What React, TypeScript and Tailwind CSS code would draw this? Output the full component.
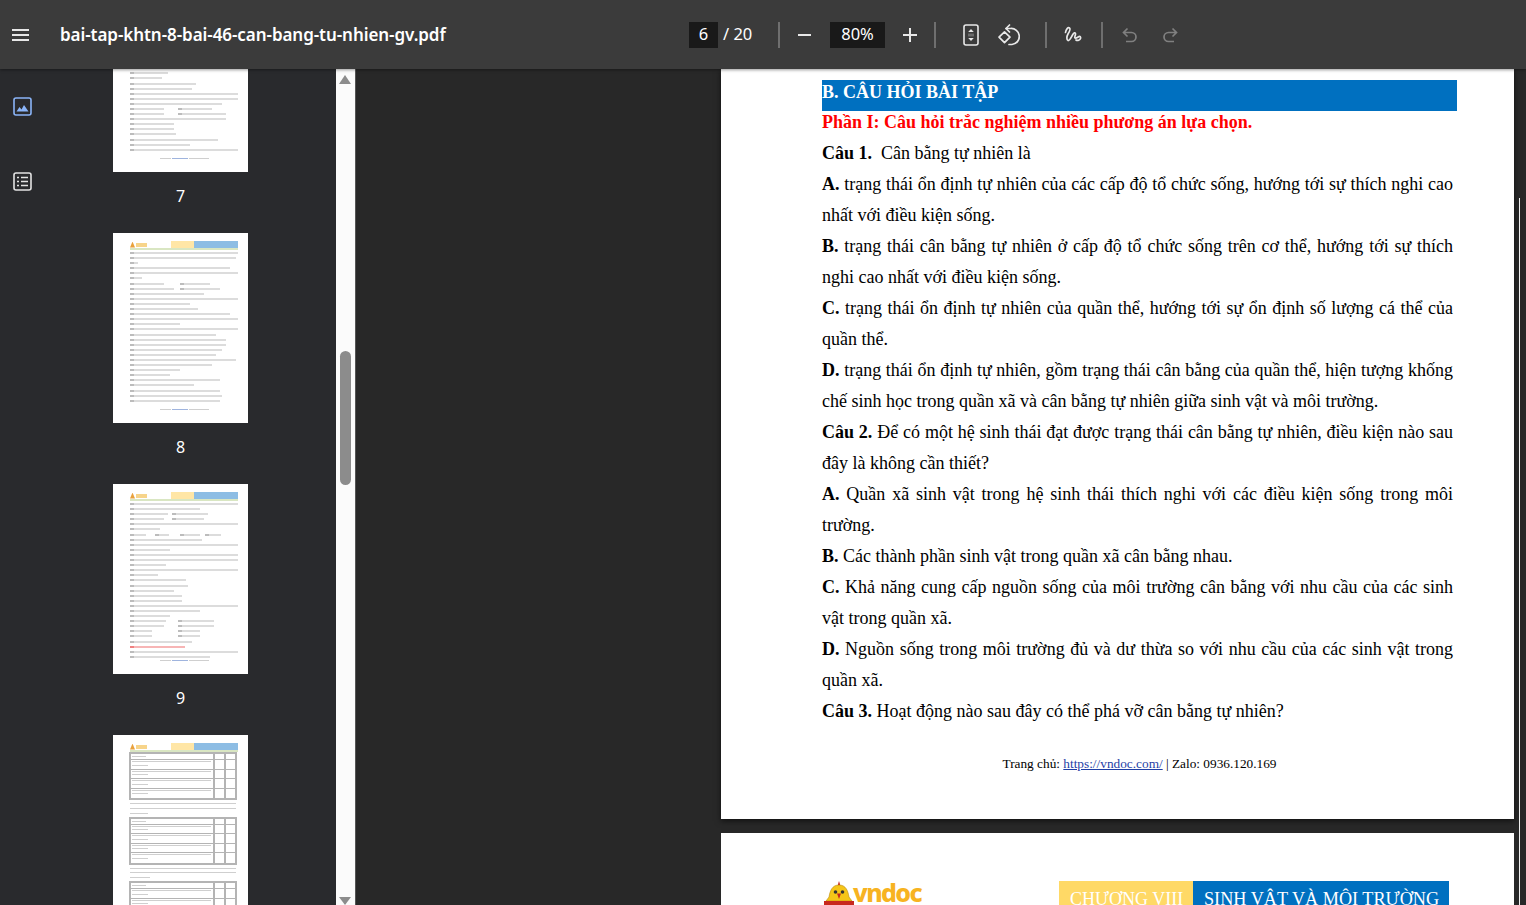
import React from "react";

type Seg = [number, number];
type Row = number | Seg[];

const page8: Row[] = [
  108, 106, 8, 100, 108, 12, [[0, 34], [50, 30]], [[0, 44], [50, 40]], 74, 108, 60, 68, 100, 108, 50, 108, 86, 96, 96,
  92, 86, 106, 82, 50, 40, 90, 64, 90, 92, 90,
];
const page9: Row[] = [
  108, 70, [[0, 38], [42, 36]], [[0, 34], [42, 32]], 108, 30, [[0, 16], [25, 14], [50, 20], [75, 16]], 72, 108, 40, 108,
  108, 36, 108, 28, 56, 58, 44, 52, 52, 108, 70, 40, [[0, 36], [48, 36]], [[0, 34], [48, 36]], [[0, 22], [48, 22]],
  [[0, 22], [48, 22]], 62, 55, 108, 80,
];
const page7: Row[] = [
  108, 90, 108, 70, 108, 60, 108, 90, 108, 70, 108, 60, 108, 90, 38, 32, 66, 62, 108, 108, 92, [[0, 34], [48, 34]],
  [[0, 34], [48, 48]], 96, 44, 44, 46, 88, 60, 108,
];

function ThumbHeader() {
  return (
    <div className="flex h-[9px] w-[108px] flex-col">
      <div className="flex h-[7px] items-center">
        <div className="flex h-[6px] w-[41px] items-center gap-[1px]">
          <div className="h-[6px] w-[5px] bg-[#e9a13c] [clip-path:polygon(50%_0,100%_100%,0_100%)]" />
          <div className="h-[4px] w-[11px] bg-[#f7d48a]" />
        </div>
        <div className="h-[7px] w-[23px] bg-[#ffe6a6]" />
        <div className="h-[7px] w-[44px] bg-[#8dbde4]" />
      </div>
      <div className="h-[2px] bg-[#d9e6c2]" />
    </div>
  );
}

function ThumbSegment({ width, red }: { width: number; red?: boolean }) {
  return (
    <div className={`h-[2px] ${red ? "bg-[#f7b5b5]" : "bg-[#dcdcdc]"}`} style={{ width }}>
      <div className={`h-[2px] w-[4px] ${red ? "bg-[#f08080]" : "bg-[#bcbcbc]"}`} />
    </div>
  );
}

function ThumbLine({ row, red }: { row: Row; red?: boolean }) {
  if (typeof row === "number") {
    return <ThumbSegment width={row} red={red} />;
  }
  return (
    <div className="relative h-[2px] shrink-0">
      {row.map((s, i) => (
        <div key={i} className="absolute top-0" style={{ left: s[0] }}>
          <ThumbSegment width={s[1]} />
        </div>
      ))}
    </div>
  );
}

function ThumbFooter() {
  return (
    <div className="flex items-center justify-center gap-[1px]">
      <div className="h-[1px] w-[11px] bg-[#cfcfcf]" />
      <div className="h-[1px] w-[16px] bg-[#9fb4de]" />
      <div className="h-[1px] w-[20px] bg-[#cfcfcf]" />
    </div>
  );
}

function Thumb({ rows, n, redAt }: { rows: Row[]; n: number; redAt?: number }) {
  return (
    <div className="mb-[27px] w-[135px]">
      <div className="flex h-[190px] flex-col bg-white pl-[17px] pr-[10px] pt-[8px]">
        <ThumbHeader />
        <div className="mt-[1px] flex h-[158px] flex-col gap-[3.1px] overflow-hidden pt-[1px]">
          {rows.map((r, i) => (
            <ThumbLine key={i} row={r} red={redAt === i} />
          ))}
        </div>
        <ThumbFooter />
      </div>
      <div className="mt-[14px] h-[20px] text-center text-[16px] leading-[20px] text-white">{n}</div>
    </div>
  );
}

function MiniTable({ rows }: { rows: number }) {
  return (
    <div className="w-[108px] border-2 border-[#b4b4b4]">
      <div className="flex h-[6px] border-b border-[#b4b4b4]">
        <div className="flex-1 pl-[1px] pt-[2px]">
          <div className="h-[1px] w-[14px] bg-[#cfcfcf]" />
        </div>
        <div className="w-[11px] border-l-2 border-[#b4b4b4]" />
        <div className="w-[11px] border-l-2 border-[#b4b4b4]" />
      </div>
      {Array.from({ length: rows }).map((_, i) => (
        <div key={i} className="flex h-[9.5px] border-b border-[#b4b4b4] last:border-b-0">
          <div className="flex flex-1 flex-col gap-[2.5px] pl-[1px] pr-[2px] pt-[1px]">
            <div className="h-[1px] w-full bg-[#cfcfcf]" />
            <div className="h-[1px] w-[16px] bg-[#cfcfcf]" />
          </div>
          <div className="w-[11px] border-l-2 border-[#b4b4b4]" />
          <div className="w-[11px] border-l-2 border-[#b4b4b4]" />
        </div>
      ))}
    </div>
  );
}

function TableThumb() {
  return (
    <div className="flex h-[190px] w-[135px] flex-col bg-white pl-[16px] pr-[11px] pt-[8px]">
      <div className="pl-[1px]">
        <ThumbHeader />
      </div>
      <MiniTable rows={4} />
      <div className="flex flex-col gap-[3.8px] py-[3px] pl-[1px]">
        <div className="h-[1px] w-[106px] bg-[#cfcfcf]" />
        <div className="h-[1px] w-[106px] bg-[#cfcfcf]" />
        <div className="h-[1px] w-[18px] bg-[#cfcfcf]" />
      </div>
      <MiniTable rows={4} />
      <div className="flex flex-col gap-[3.8px] py-[3px] pl-[1px]">
        <div className="h-[1px] w-[106px] bg-[#cfcfcf]" />
        <div className="h-[1px] w-[106px] bg-[#cfcfcf]" />
        <div className="h-[1px] w-[20px] bg-[#cfcfcf]" />
      </div>
      <MiniTable rows={4} />
    </div>
  );
}

function Sep({ className }: { className: string }) {
  return <div className={`h-[26px] w-[2px] shrink-0 bg-[#6f6f6f] ${className}`} />;
}

function Toolbar() {
  return (
    <div className="relative z-10 flex h-[69px] shrink-0 items-center bg-[#3b3b3b] font-['Noto_Sans',sans-serif] text-white shadow-[0_1px_3px_rgba(0,0,0,0.4)]">
      <div className="flex w-[689px] shrink-0 items-center">
        <div className="ml-[12px] flex w-[17px] flex-col gap-[3px]">
          <div className="h-[2px] bg-[#e8e8e8]" />
          <div className="h-[2px] bg-[#e8e8e8]" />
          <div className="h-[2px] bg-[#e8e8e8]" />
        </div>
        <div className="ml-[31px] pt-[1px] text-[17px] font-semibold tracking-[-0.06px]">
          bai-tap-khtn-8-bai-46-can-bang-tu-nhien-gv.pdf
        </div>
      </div>
      <div className="flex h-[26px] w-[29px] shrink-0 items-center justify-center bg-[#191919] text-[16.5px]">6</div>
      <div className="ml-[5px] w-[34px] shrink-0 whitespace-pre text-[16.5px]">/ 20</div>
      <Sep className="ml-[21px]" />
      <div className="ml-[18px] h-[2px] w-[13px] shrink-0 bg-[#e8e8e8]" />
      <div className="ml-[19px] flex h-[26px] w-[55px] shrink-0 items-center justify-center bg-[#191919] text-[16.5px]">
        80%
      </div>
      <svg className="ml-[17px] shrink-0" width="16" height="16" viewBox="0 0 16 16">
        <path d="M8 1v14M1 8h14" stroke="#e8e8e8" strokeWidth="2" />
      </svg>
      <Sep className="ml-[16px]" />
      <svg className="ml-[27px] shrink-0" width="16" height="22" viewBox="0 0 16 22" fill="none">
        <rect x="1" y="1" width="14" height="20" rx="2" stroke="#e8e8e8" strokeWidth="1.6" />
        <path d="M5.2 8 8 5l2.8 3zM5.2 14 8 17l2.8-3z" fill="#e8e8e8" />
        <path d="M5 10.2h6M5 11.8h6" stroke="#e8e8e8" strokeWidth="0.8" opacity="0.5" />
      </svg>
      <svg className="ml-[18px] shrink-0" width="23" height="22" viewBox="0 0 23 22" fill="none" stroke="#e8e8e8" strokeWidth="1.7">
        <path d="M7.5 7.8 13 13.2 7.5 18.7 2 13.2z" strokeLinejoin="round" />
        <path d="M9 4.5h4.5a8 8 0 0 1 1.5 16h-3" strokeLinecap="round" />
        <path d="M12.5 1 9 4.5 12.5 8" strokeLinecap="round" strokeLinejoin="round" />
      </svg>
      <Sep className="ml-[25px]" />
      <svg className="ml-[17px] shrink-0" width="18" height="18" viewBox="0 0 18 18" fill="none" stroke="#e8e8e8" strokeWidth="1.7" strokeLinecap="round">
        <path d="M1.5 6.5C2 3 4 1 5.5 2s0 3.5-1.5 6-1.5 6 0 6.5 3-3 4.5-5.5 3-3 3-1-1.5 3.5-.5 4 3-1 4-1.5 2 .5 1.5 2-3 2.5-4.5 1.5" />
      </svg>
      <Sep className="ml-[19px]" />
      <svg className="ml-[19px] shrink-0" width="16" height="16" viewBox="0 0 16 16" fill="none" stroke="#808080" strokeWidth="1.7">
        <path d="M5.5 1.5 1.5 5.5l4 4M1.5 5.5h8a4.5 4.5 0 0 1 0 9H4" />
      </svg>
      <svg className="ml-[24px] shrink-0" width="16" height="16" viewBox="0 0 16 16" fill="none" stroke="#808080" strokeWidth="1.7">
        <path d="M10.5 1.5l4 4-4 4M14.5 5.5h-8a4.5 4.5 0 0 0 0 9H12" />
      </svg>
    </div>
  );
}

function Sidebar() {
  return (
    <div className="relative flex w-[336px] shrink-0 overflow-hidden bg-[#292a2d] font-['Noto_Sans',sans-serif]">
      <div className="flex w-[113px] shrink-0 flex-col pl-[13px] pt-[28px]">
        <svg width="19" height="19" viewBox="0 0 19 19" fill="none">
          <rect x="1" y="1" width="17" height="17" rx="2" stroke="#8ab4f8" strokeWidth="1.6" />
          <path d="M3.5 14.5 6.5 10l2 2.5L11 8l4.5 6.5z" fill="#8ab4f8" />
        </svg>
        <svg className="mt-[56px]" width="19" height="19" viewBox="0 0 19 19" fill="none">
          <rect x="1" y="1" width="17" height="17" rx="2" stroke="#e3e3e3" strokeWidth="1.6" />
          <path d="M4 5.5h2M8 5.5h7M4 9.5h2M8 9.5h7M4 13.5h2M8 13.5h7" stroke="#e3e3e3" strokeWidth="1.6" />
        </svg>
      </div>
      <div className="-mt-[87px] flex w-[135px] shrink-0 flex-col">
        <Thumb rows={page7} n={7} />
        <Thumb rows={page8} n={8} />
        <Thumb rows={page9} n={9} redAt={28} />
        <TableThumb />
      </div>
    </div>
  );
}

function ThumbScrollbar() {
  return (
    <div className="flex w-[20px] shrink-0 flex-col items-center border-r border-[#555] bg-[#fbfbfb] pr-[1px]">
      <div className="mt-[6px] h-0 w-0 border-x-[6px] border-b-[9px] border-x-transparent border-b-[#8c8c8c]" />
      <div className="mt-[267px] h-[134px] w-[11px] rounded-full bg-[#8c8c8c]" />
      <div className="mt-auto h-0 w-0 border-x-[6px] border-t-[8px] border-x-transparent border-t-[#8c8c8c]" />
    </div>
  );
}

function Line({ children, justify }: { children: React.ReactNode; justify?: boolean }) {
  return (
    <p className={`h-[31px] w-[631px] leading-[31px] ${justify ? "text-justify [text-align-last:justify]" : ""}`}>
      {children}
    </p>
  );
}

function FirstPage() {
  return (
    <div className="h-[750px] w-[793px] shrink-0 bg-white pl-[101px] pt-[11px] font-['Liberation_Serif',serif] text-[18px] text-black shadow-[0_2px_6px_rgba(0,0,0,0.6)]">
      <div className="h-[31px] w-[635px] bg-[#0070c0] pt-[1px] font-bold leading-[22px] text-white">B. CÂU HỎI BÀI TẬP</div>
      <div className="h-[27px] font-bold leading-[22px] text-[#ff0000]">
        Phần I: Câu hỏi trắc nghiệm nhiều phương án lựa chọn.
      </div>
      <Line>
        <b>Câu 1.</b>&nbsp; Cân bằng tự nhiên là
      </Line>
      <Line justify>
        <b>A.</b> trạng thái ổn định tự nhiên của các cấp độ tổ chức sống, hướng tới sự thích nghi cao
      </Line>
      <Line>nhất với điều kiện sống.</Line>
      <Line justify>
        <b>B.</b> trạng thái cân bằng tự nhiên ở cấp độ tổ chức sống trên cơ thể, hướng tới sự thích
      </Line>
      <Line>nghi cao nhất với điều kiện sống.</Line>
      <Line justify>
        <b>C.</b> trạng thái ổn định tự nhiên của quần thể, hướng tới sự ổn định số lượng cá thể của
      </Line>
      <Line>quần thể.</Line>
      <Line justify>
        <b>D.</b> trạng thái ổn định tự nhiên, gồm trạng thái cân bằng của quần thể, hiện tượng khống
      </Line>
      <Line>chế sinh học trong quần xã và cân bằng tự nhiên giữa sinh vật và môi trường.</Line>
      <Line justify>
        <b>Câu 2.</b> Để có một hệ sinh thái đạt được trạng thái cân bằng tự nhiên, điều kiện nào sau
      </Line>
      <Line>đây là không cần thiết?</Line>
      <Line justify>
        <b>A.</b> Quần xã sinh vật trong hệ sinh thái thích nghi với các điều kiện sống trong môi
      </Line>
      <Line>trường.</Line>
      <Line>
        <b>B.</b> Các thành phần sinh vật trong quần xã cân bằng nhau.
      </Line>
      <Line justify>
        <b>C.</b> Khả năng cung cấp nguồn sống của môi trường cân bằng với nhu cầu của các sinh
      </Line>
      <Line>vật trong quần xã.</Line>
      <Line justify>
        <b>D.</b> Nguồn sống trong môi trường đủ và dư thừa so với nhu cầu của các sinh vật trong
      </Line>
      <Line>quần xã.</Line>
      <Line>
        <b>Câu 3.</b> Hoạt động nào sau đây có thể phá vỡ cân bằng tự nhiên?
      </Line>
      <div className="mt-[27px] w-[635px] text-center text-[13.3px] leading-[20px]">
        Trang chủ: <span className="text-[#1f3fa6] underline">https://vndoc.com/</span> | Zalo: 0936.120.169
      </div>
    </div>
  );
}

function SecondPage() {
  return (
    <div className="mt-[14px] flex h-[300px] w-[793px] shrink-0 items-start bg-white pl-[103px] pt-[48px] font-['Liberation_Serif',serif]">
      <div className="flex w-[235px] shrink-0 items-start">
        <svg className="shrink-0" width="30" height="26" viewBox="0 0 30 26">
          <path d="M15 0l1.8 6h-3.6z" fill="#c8281e" />
          <path d="M15 4c7 0 9 6 10 12l3 4H2l3-4C6 10 8 4 15 4z" fill="#f5c518" stroke="#b88a10" strokeWidth="0.6" />
          <circle cx="11.5" cy="11" r="1.8" fill="#333" />
          <circle cx="18.5" cy="11" r="1.8" fill="#333" />
          <path d="M13 12.5h4L15 18z" fill="#c8281e" />
          <rect x="0" y="20" width="30" height="6" fill="#c8281e" />
        </svg>
        <div className="-mt-[6px] -ml-[1px] font-['Noto_Sans',sans-serif] text-[25px] font-extrabold leading-[34px] tracking-[-1.6px] text-[#f7b321]">
          vndoc
        </div>
      </div>
      <div className="flex h-[40px] leading-[30px] text-white">
        <div className="h-full w-[134px] bg-[#ffd966] pl-[11px] pt-[3px] text-[18px]">CHƯƠNG VIII</div>
        <div className="h-full w-[256px] bg-[#0070c0] pl-[11px] pt-[3px] text-[18.2px]">SINH VẬT VÀ MÔI TRƯỜNG</div>
      </div>
    </div>
  );
}

export default function App() {
  return (
    <div className="flex h-screen w-full flex-col overflow-hidden bg-[#282828]">
      <Toolbar />
      <div className="flex min-h-0 flex-1">
        <Sidebar />
        <ThumbScrollbar />
        <div className="relative flex min-w-0 flex-1 flex-col items-end overflow-hidden pr-[12px]">
          <FirstPage />
          <SecondPage />
          <div className="absolute right-[6px] top-[129px] h-[707px] w-[1px] bg-[#f0f0f0]" />
        </div>
      </div>
    </div>
  );
}
